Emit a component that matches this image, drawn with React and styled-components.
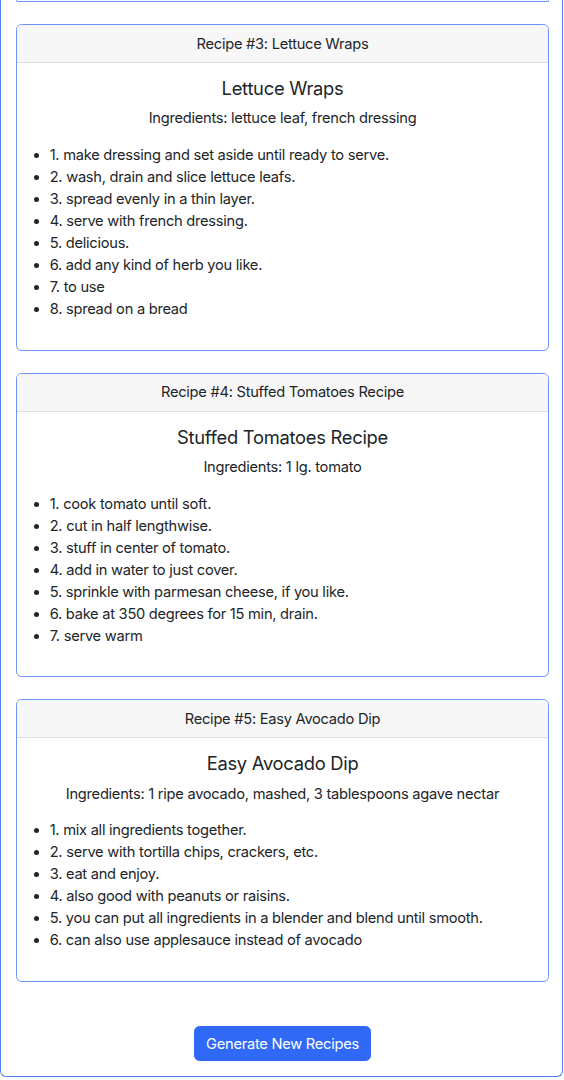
import React from "react";
import styled, { createGlobalStyle } from "styled-components";

const Global = createGlobalStyle`
  html, body { margin: 0; padding: 0; background: #fff; }
  body {
    font-family: Inter, "Noto Sans", "Liberation Sans", sans-serif;
    font-size: 14.67px;
    line-height: 22px;
    letter-spacing: -0.018em;
    color: #212529;
  }
  * { box-sizing: border-box; }
`;

const Page = styled.div`
  width: 563px;
  border: 1px solid #5582f6;
  border-top: none;
  border-radius: 0 0 6px 6px;
  padding: 0 13px 15px 15px;
`;

const PrevCardEnd = styled.div`
  height: 2px;
  border: 1px solid #6f92f7;
  border-top: none;
  border-radius: 0 0 5px 5px;
  margin-bottom: 22px;
`;

const Card = styled.section`
  border: 1px solid #6f92f7;
  border-radius: 5.5px;
  margin-bottom: 22px;
  overflow: hidden;
  background: #fff;
`;

const CardHeader = styled.header`
  background: #f7f7f7;
  border-bottom: 1px solid #dfdfdf;
  padding: 7.5px 14.67px;
  text-align: center;
  font-size: 14.67px;
  line-height: 22px;
`;

const CardBody = styled.div`
  padding: 14px 14.67px 15.1px;
`;

const Title = styled.h5`
  margin: 0 0 8.33px;
  font-size: 18.33px;
  line-height: 22px;
  font-weight: 400;
  text-align: center;
`;

const Ingredients = styled.p`
  margin: 0 0 14.67px;
  text-align: center;
`;

const Steps = styled.ul`
  margin: 0 0 14.67px;
  padding-left: 18px;
`;

const Step = styled.li`
  line-height: 22px;
`;

const Footer = styled.div`
  display: flex;
  justify-content: center;
  padding-top: 22px;
`;

const Button = styled.button`
  font-family: inherit;
  font-size: 14.67px;
  line-height: 22px;
  letter-spacing: -0.018em;
  color: #fff;
  background: #2f69f5;
  border: 1px solid #2f69f5;
  border-radius: 5.5px;
  padding: 5.5px 11px;
  cursor: pointer;
`;

const recipes = [
  {
    n: 3,
    name: "Lettuce Wraps",
    ingredients: "lettuce leaf, french dressing",
    steps: [
      "make dressing and set aside until ready to serve.",
      "wash, drain and slice lettuce leafs.",
      "spread evenly in a thin layer.",
      "serve with french dressing.",
      "delicious.",
      "add any kind of herb you like.",
      "to use",
      "spread on a bread",
    ],
  },
  {
    n: 4,
    name: "Stuffed Tomatoes Recipe",
    ingredients: "1 lg. tomato",
    steps: [
      "cook tomato until soft.",
      "cut in half lengthwise.",
      "stuff in center of tomato.",
      "add in water to just cover.",
      "sprinkle with parmesan cheese, if you like.",
      "bake at 350 degrees for 15 min, drain.",
      "serve warm",
    ],
  },
  {
    n: 5,
    name: "Easy Avocado Dip",
    ingredients: "1 ripe avocado, mashed, 3 tablespoons agave nectar",
    steps: [
      "mix all ingredients together.",
      "serve with tortilla chips, crackers, etc.",
      "eat and enjoy.",
      "also good with peanuts or raisins.",
      "you can put all ingredients in a blender and blend until smooth.",
      "can also use applesauce instead of avocado",
    ],
  },
];

export default function App() {
  return (
    <>
      <Global />
      <Page>
        <PrevCardEnd />
        {recipes.map((r) => (
          <Card key={r.n}>
            <CardHeader>
              Recipe #{r.n}: {r.name}
            </CardHeader>
            <CardBody>
              <Title>{r.name}</Title>
              <Ingredients>Ingredients: {r.ingredients}</Ingredients>
              <Steps>
                {r.steps.map((s, i) => (
                  <Step key={i}>
                    {i + 1}. {s}
                  </Step>
                ))}
              </Steps>
            </CardBody>
          </Card>
        ))}
        <Footer>
          <Button>Generate New Recipes</Button>
        </Footer>
      </Page>
    </>
  );
}
